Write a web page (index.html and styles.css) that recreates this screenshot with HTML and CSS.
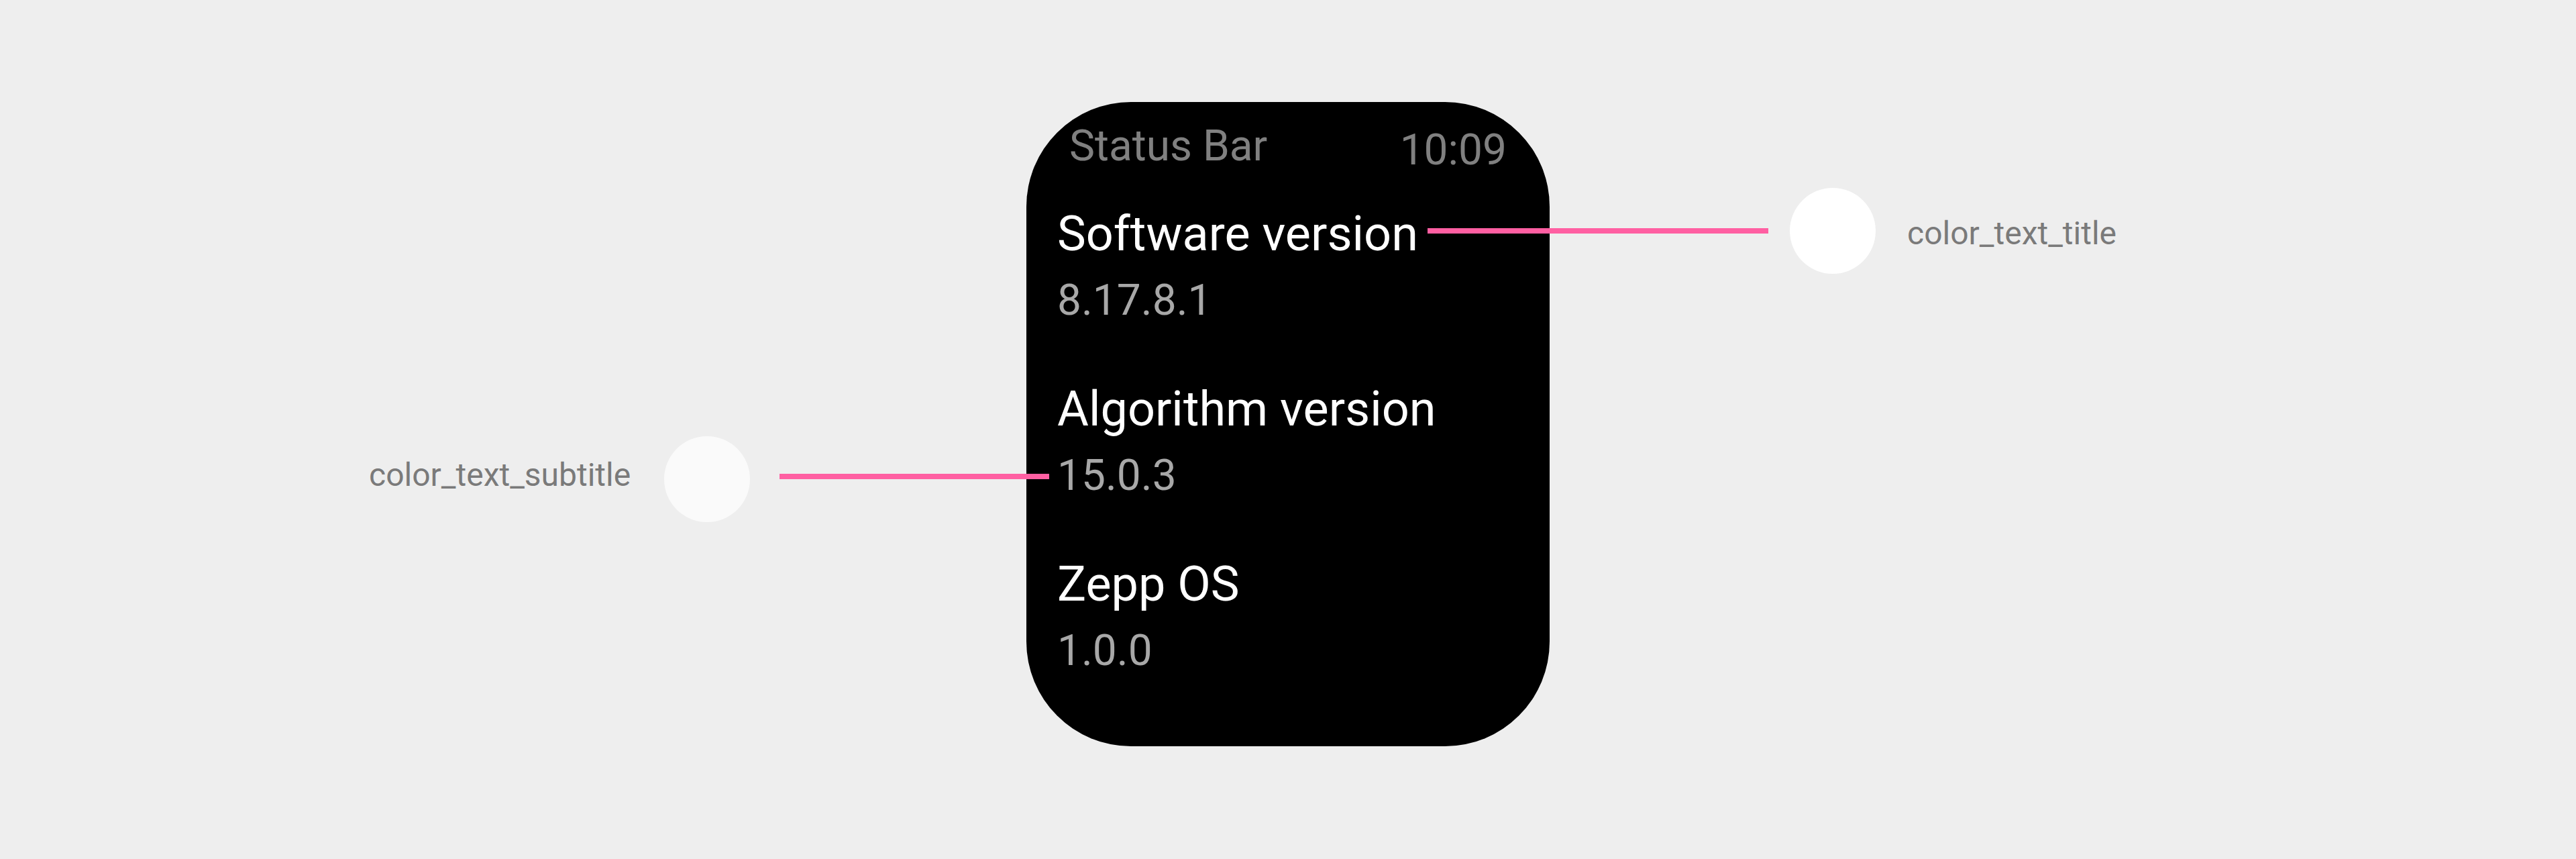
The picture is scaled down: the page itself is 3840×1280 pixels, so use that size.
FILE: index.html
```html
<!DOCTYPE html>
<html lang="en">
<head>
  <meta charset="UTF-8" />
  <meta name="viewport" content="width=device-width, initial-scale=1.0" />
  <title>Watch text colors</title>
  <link rel="stylesheet" href="styles.css">
</head>
<body>
  <div class="stage">
    <div class="watch">
      <div class="status-bar">
        <span class="status-title">Status Bar</span>
        <span class="status-time">10:09</span>
      </div>
      <div class="list">
        <div class="item">
          <div class="item-title">Software version</div>
          <div class="item-value">8.17.8.1</div>
        </div>
        <div class="item">
          <div class="item-title">Algorithm version</div>
          <div class="item-value">15.0.3</div>
        </div>
        <div class="item">
          <div class="item-title">Zepp OS</div>
          <div class="item-value">1.0.0</div>
        </div>
      </div>
    </div>

    <!-- callouts sit over the watch edge -->
    <div class="callout callout-title">
      <span class="line"></span>
      <span class="dot dot-title"></span>
      <span class="label">color_text_title</span>
    </div>
    <div class="callout callout-subtitle">
      <span class="label">color_text_subtitle</span>
      <span class="dot dot-subtitle"></span>
      <span class="line"></span>
    </div>
  </div>
</body>
</html>
```

FILE: styles.css
```css
body {
  margin: 0;
  background-color: #eeeeee;
  font-family: Roboto, "Noto Sans", sans-serif;
}

.stage {
  position: relative;
  width: 3840px;
  height: 1280px;
  display: flex;
  justify-content: center;
  padding-top: 152px;
  box-sizing: border-box;
}

.watch {
  width: 780px;
  height: 960px;
  background-color: #000;
  border-radius: 156px;
  padding-top: 26px;
  box-sizing: border-box;
  display: flex;
  flex-direction: column;
  overflow: hidden;
}

.status-bar {
  display: flex;
  justify-content: space-between;
  align-items: flex-start;
  padding: 0 64px;
  font-size: 64px;
  line-height: 80px;
  color: #808080;
}

.status-time {
  padding-top: 6px;
}

.list {
  margin-top: 37px;
  padding-left: 46px;
  display: flex;
  flex-direction: column;
  gap: 74px;
}

.item {
  display: flex;
  flex-direction: column;
  gap: 11px;
}

.item-title {
  font-size: 72px;
  line-height: 96px;
  color: #ffffff;
}

.item-value {
  font-size: 64px;
  line-height: 80px;
  color: #a8a8a8;
}

.callout {
  position: absolute;
  display: flex;
  align-items: center;
  height: 128px;
}

.callout-title {
  left: 2128px;
  top: 280px;
}

.callout-subtitle {
  left: 550px;
  top: 650px;
}

.line {
  height: 8px;
  background-color: #ff5fa2;
}

.callout-title .line {
  width: 508px;
  margin-right: 32px;
}

.callout-subtitle .line {
  width: 402px;
  margin-left: 44px;
  margin-bottom: 8px;
}

.dot {
  width: 128px;
  height: 128px;
  border-radius: 50%;
}

.dot-title {
  background-color: #ffffff;
}

.dot-subtitle {
  background-color: #fafafa;
}

.label {
  font-size: 48px;
  line-height: 56px;
  color: #7a7a7a;
}

.callout-title .label {
  margin-left: 47px;
  padding-top: 8px;
}

.callout-subtitle .label {
  margin-right: 50px;
  padding-bottom: 12px;
}
```
